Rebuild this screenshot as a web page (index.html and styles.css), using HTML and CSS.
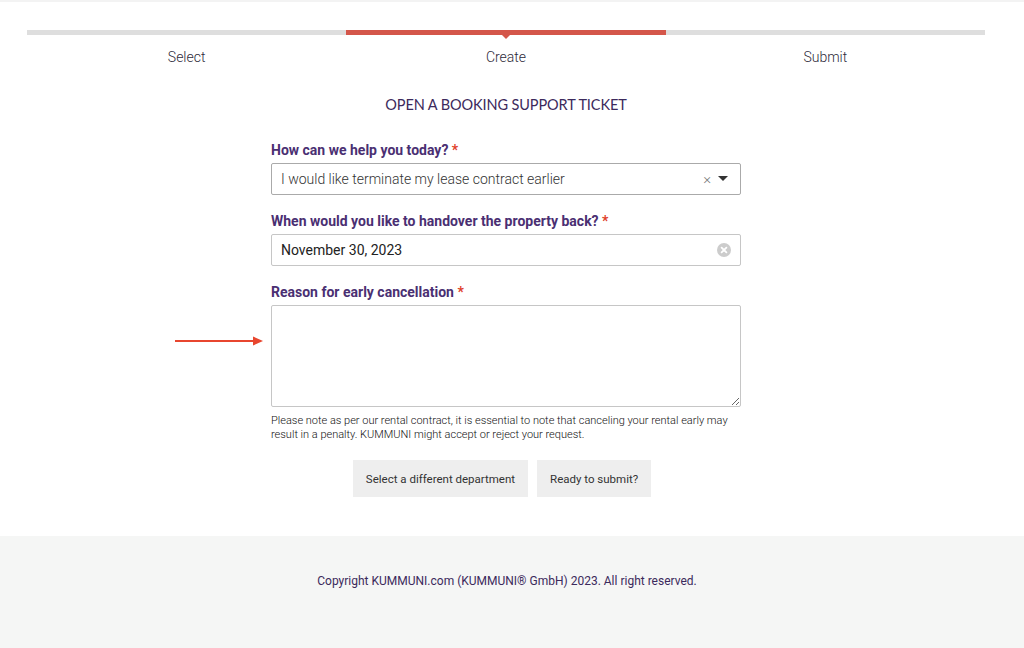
FILE: index.html
```html
<!DOCTYPE html>
<html lang="en">
<head>
<meta charset="utf-8">
<title>Open a booking support ticket</title>
<link rel="stylesheet" href="styles.css">
</head>
<body>
<div class="page">
  <div class="steps">
    <div class="step"><div class="bar"></div><div class="step-label">Select</div></div>
    <div class="step active"><div class="bar"></div><div class="step-label">Create</div></div>
    <div class="step"><div class="bar"></div><div class="step-label">Submit</div></div>
  </div>

  <h1 class="title">OPEN A BOOKING SUPPORT TICKET</h1>

  <form class="form">
    <div class="field">
      <label class="label">How can we help you today? <span class="req">*</span></label>
      <div class="control">
        <span class="value light">I would like terminate my lease contract earlier</span>
        <span class="clear-x">×</span>
        <svg class="caret" width="10" height="6" viewBox="0 0 10 6"><path d="M0 0h10L5 5z" fill="#333"/></svg>
      </div>
    </div>
    <div class="field">
      <label class="label">When would you like to handover the property back? <span class="req">*</span></label>
      <div class="control">
        <span class="value">November 30, 2023</span>
        <svg class="clear-circle" width="14" height="14" viewBox="0 0 14 14"><circle cx="7" cy="7" r="7" fill="#cccccc"/><path d="M4.6 4.6l4.8 4.8M9.4 4.6l-4.8 4.8" stroke="#fff" stroke-width="1.8" stroke-linecap="round"/></svg>
      </div>
    </div>
    <div class="field">
      <label class="label">Reason for early cancellation <span class="req">*</span></label>
      <div class="area-wrap">
        <textarea class="area"></textarea>
        <svg class="pointer" width="90" height="12" viewBox="0 0 90 12"><path d="M0 6h80" stroke="#e8462f" stroke-width="2"/><path d="M78 1.5L88 6 78 10.5z" fill="#e8462f"/></svg>
      </div>
      <p class="note">Please note as per our rental contract, it is essential to note that canceling your rental early may result in a penalty. KUMMUNI might accept or reject your request.</p>
    </div>
    <div class="actions">
      <button type="button" class="btn">Select a different department</button>
      <button type="button" class="btn">Ready to submit?</button>
    </div>
  </form>
</div>
<footer class="footer">
  <p>Copyright KUMMUNI.com (KUMMUNI® GmbH) 2023. All right reserved.</p>
</footer>
</body>
</html>
```

FILE: styles.css
```css
* { box-sizing: border-box; }
html, body { margin: 0; padding: 0; }
body {
  font-family: Roboto, "Liberation Sans", sans-serif;
  color: #333;
  background: #fff;
  border-top: 2px solid #f3f3f3;
}
.page {
  padding: 28px 39px 39px 27px;
}
.steps {
  display: flex;
}
.step {
  flex: 1;
  display: flex;
  flex-direction: column;
  align-items: center;
}
.bar {
  width: 100%;
  height: 5px;
  background: #dedede;
  position: relative;
}
.step.active .bar { background: #d4564a; }
.step.active .bar::after {
  content: "";
  position: absolute;
  left: 50%;
  top: 5px;
  margin-left: -4px;
  border-left: 4px solid transparent;
  border-right: 4px solid transparent;
  border-top: 4px solid #d4564a;
}
.step-label {
  margin-top: 14px;
  font-size: 14px;
  font-weight: 300;
  color: #2e2a3a;
  line-height: 16px;
}
.title {
  margin: 31px 0 0;
  text-align: center;
  font-family: Lato, "Open Sans", sans-serif;
  font-weight: 400;
  font-size: 14.5px;
  letter-spacing: -0.1px;
  color: #3c2a5c;
  line-height: 18px;
}
.form {
  width: 470px;
  margin: 28px auto 0;
}
.field { margin-bottom: 18px; }
.field:last-of-type { margin-bottom: 0; }
.label {
  display: block;
  font-weight: 700;
  font-size: 14px;
  line-height: 16px;
  color: #4a2f72;
  margin-bottom: 5px;
}
.req { color: #e0402a; }
.control {
  height: 32px;
  border: 1px solid #c6c6c6;
  border-radius: 2px;
  display: flex;
  align-items: center;
  padding: 0 9px;
}
.field:first-child .control { border-color: #aaa; }
.value {
  flex: 1;
  font-size: 14px;
  color: #222;
}
.value.light { font-weight: 300; color: #333; }
.clear-x {
  font-size: 15px;
  color: #777;
  margin-right: 7px;
  font-weight: 300;
}
.caret { margin-right: 3px; }
.area-wrap { position: relative; }
.area {
  display: block;
  width: 470px;
  height: 102px;
  border: 1px solid #c6c6c6;
  border-radius: 2px;
  resize: vertical;
  font-family: inherit;
}
.pointer {
  position: absolute;
  left: -96px;
  top: 30px;
}
.note {
  margin: 7px 0 0;
  font-size: 11px;
  line-height: 14px;
  font-weight: 300;
  color: #111;
}
.actions {
  display: flex;
  justify-content: center;
  gap: 9px;
  margin-top: 17px;
  padding-right: 8px;
}
.btn {
  border: none;
  background: #eeeeee;
  height: 37px;
  padding: 0 13px;
  font-family: inherit;
  font-size: 11.5px;
  color: #333;
  border-radius: 0;
}
.footer {
  background: #f5f6f5;
  height: 112px;
  display: flex;
  justify-content: center;
  padding-top: 37px;
  padding-right: 10px;
}
.footer p {
  margin: 0;
  font-family: Roboto, sans-serif;
  font-size: 12px;
  color: #3c2a5c;
  line-height: 16px;
}
```
